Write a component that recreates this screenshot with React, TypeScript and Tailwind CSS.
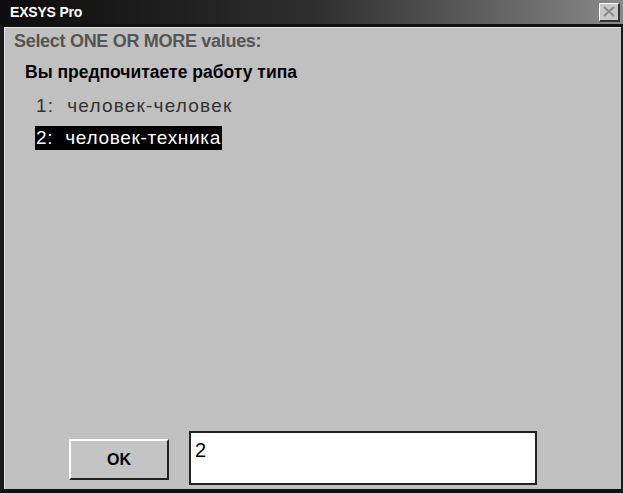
import React from "react";

export default function App() {
  return (
    <div
      className="w-[623px] h-[493px] bg-[#c0c0c0] flex flex-col overflow-hidden"
      style={{ fontFamily: '"Liberation Sans", Arial, sans-serif' }}
    >
      {/* Title bar */}
      <div className="h-[24px] flex items-center justify-between pl-[10px] pr-[3px] bg-gradient-to-r from-[#0d0d0d] via-[#2e2e2e] to-[#8a8a8a]">
        <span className="text-white font-bold text-[14px] tracking-[-0.2px]">EXSYS Pro</span>
        <div className="w-[21px] h-[19px] bg-[#c8c8c8] border-t border-l border-white border-b-[2px] border-r-[2px] border-b-[#333] border-r-[#333] flex items-center justify-center">
          <svg width="12" height="11" viewBox="0 0 12 11">
            <path d="M1 1 L11 10 M11 1 L1 10" stroke="#8a8a8a" strokeWidth="2" />
          </svg>
        </div>
      </div>
      {/* Client area */}
      <div className="flex-1 flex flex-col border-t-[3px] border-t-[#111] border-l-[4px] border-l-[#1a1a1a] border-r-[2px] border-r-[#1a1a1a] border-b-[4px] border-b-[#111]">
        <div className="flex-1 flex flex-col border-t border-l border-[#e0e0e0] pl-[9px] pt-[3px]">
          <div className="text-[#555555] font-bold text-[18px] leading-[20px] tracking-[-0.3px]">
            Select ONE OR MORE values:
          </div>
          <div className="text-black font-bold text-[17.5px] leading-[20px] mt-[11px] pl-[11px]">
            Вы предпочитаете работу типа
          </div>
          <div className="flex flex-col gap-[8px] pl-[21px] mt-[12px] text-[19px] leading-[24px] text-[#333]">
            <div className="px-[1px] self-start tracking-[1.2px]">1:&nbsp;&nbsp;человек-человек</div>
            <div className="px-[1px] self-start tracking-[0.7px] bg-black text-white">2:&nbsp;&nbsp;человек-техника</div>
          </div>
          <div className="flex-1" />
          <div className="flex items-end pl-[55px] pb-[4px] gap-[20px]">
            <button className="w-[100px] h-[41px] mb-[5px] bg-[#c4c4c4] border-t-[2px] border-l-[2px] border-white border-b-[2px] border-r-[2px] border-b-[#222] border-r-[#222] text-black font-bold text-[16px] flex items-center justify-center">
              OK
            </button>
            <div className="w-[348px] h-[54px] bg-white border-[2px] border-[#222] px-[4px] pt-[6px] text-[20px] leading-[22px] text-black">
              2
            </div>
          </div>
        </div>
      </div>
    </div>
  );
}
